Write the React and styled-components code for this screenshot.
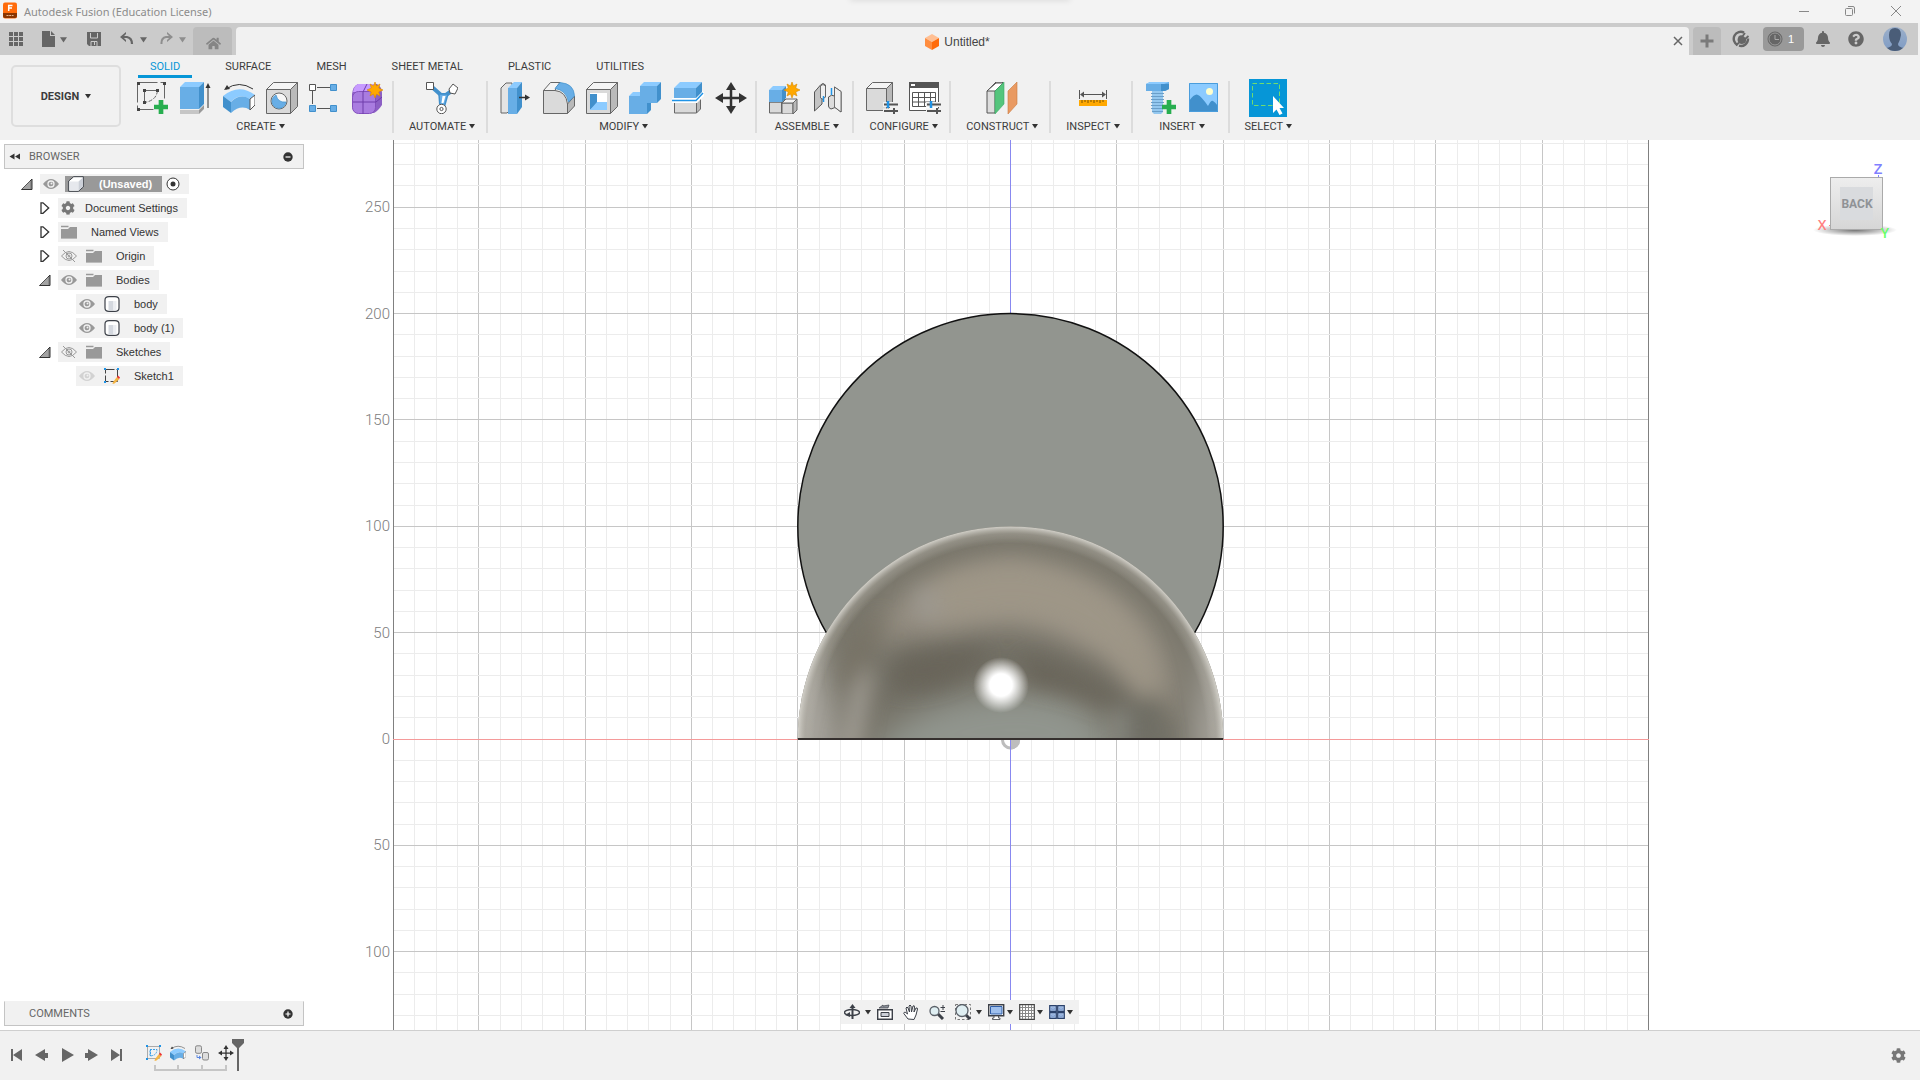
import React from 'react'
import styled, { createGlobalStyle } from 'styled-components'
import { FaBell, FaQuestionCircle, FaHome, FaCog } from 'react-icons/fa'

const GlobalStyle = createGlobalStyle`
    * {
        box-sizing: border-box;
    }
    body {
        margin: 0;
        background: #f1f1f1;
        color: #3c3c3c;
        font-family: "Liberation Sans", Arial, sans-serif;
        font-size: 11px;
    }
    button {
        display: inline-flex;
        align-items: center;
        justify-content: center;
        padding: 0;
        border: 0;
        background: none;
        color: inherit;
        font: inherit;
        cursor: pointer;
    }
    svg {
        display: block;
        flex: none;
    }
`

const Page = styled.div`
    display: flex;
    flex-direction: column;
    min-height: 100vh;
`

/* ---------- icons ---------- */

const B = { front: '#68aee6', top: '#8ccbff', side: '#4190cc' }
const G = { front: '#dadada', top: '#f4f4f4', side: '#b9b9b9' }

const Svg = ({ w = 32, h = w, vw = w, vh = h, children, ...rest }) => (
    <svg width={w} height={h} viewBox={`0 0 ${vw} ${vh}`} fill="none" aria-hidden="true" {...rest}>
        {children}
    </svg>
)

const Caret = ({ size = 6, color = '#333' }) => (
    <Svg w={size} h={size} vw={6} vh={6}><path d="M0 1h6L3 5.500z" fill={color} /></Svg>
)

const Box = ({ x = 0, y = 0, w = 20, h = 22, d = 6, c = G, stroke = 'none' }) => (
    <g stroke={stroke} strokeLinejoin="round">
        <path d={`M${x} ${y + d}h${w}v${h}h${-w}z`} fill={c.front} />
        <path d={`M${x} ${y + d}l${d} ${-d}h${w}l${-d} ${d}z`} fill={c.top} />
        <path d={`M${x + w} ${y + d}l${d} ${-d}v${h}l${-d} ${d}z`} fill={c.side} />
    </g>
)

const Plus = ({ x, y, s = 13 }) => (
    <path
        d={`M${x} ${y - s / 2}v${s}M${x - s / 2} ${y}h${s}`}
        stroke="#27ae4f" strokeWidth={s / 3}
    />
)

const Star = ({ x, y }) => (
    <path
        transform={`translate(${x} ${y})`}
        d="M0-8L1.500-4L5-6L3.700-2L8 0L3.700 2L5 6L1.500 4L0 8L-1.500 4L-5 6L-3.700 2L-8 0L-3.700-2L-5-6L-1.500-4z"
        fill="#ffa800" stroke="#d98a00" strokeWidth=".6"
    />
)

const SketchIcon = () => (
    <Svg>
        <path d="M.5.500h27v18M.5.500v27h17" stroke="#666" strokeDasharray="20 3" />
        <path d="M7.500 8.500h13M7.500 8.500v12" stroke="#666" />
        <path d="M20.500 8.500q-1 10-13 12" stroke="#666" strokeDasharray="4 1.500" />
        {[[0, 0], [26, 0], [0, 26], [6, 7], [19, 7], [6, 19]].map(([x, y]) => (
            <path key={x + '-' + y} d={`M${x} ${y}h3v3h-3z`} fill="#444" />
        ))}
        <Plus x={24} y={25} s={14} />
    </Svg>
)
const ExtrudeIcon = () => (
    <Svg>
        <path d="M0 28h19v4H0z" fill="#c6c6c6" /><path d="M19 28l5-5v4l-5 5z" fill="#999" />
        <Box w={19} h={22} d={5} c={B} />
        <path d="M28 26V4" stroke="#333" /><path d="M25.500 6L28 1l2.500 5z" fill="#333" />
    </Svg>
)
const RevolveIcon = ({ size = 32 }) => (
    <Svg w={size} vw={32} vh={32}>
        <path d="M3 7Q16-2 30 7" stroke="#333" /><path d="M1 8l3-5 3 4z" fill="#333" />
        <path d="M0 14Q16 1 32 13L27 17Q16 11 8 20z" fill={B.top} />
        <path d="M0 14l8 6v11l-8-6z" fill={B.side} />
        <path d="M8 20q9-9 19-3v11q-9-6-19 3z" fill={B.front} />
        <path d="M32 13v10l-5 5V17z" fill="#fff" stroke="#555" />
    </Svg>
)
const HoleIcon = () => (
    <Svg>
        <Box x={0.5} y={0.5} w={24} h={24} d={7} stroke="#666" />
        <circle cx="13" cy="19" r="8" fill="#f7f7f7" stroke="#666" />
        <path d="M10 13A7 7 0 1 0 20 20Q12 21 10 13z" fill={B.front} stroke={B.side} strokeWidth=".7" />
    </Svg>
)
const PatternIcon = () => (
    <Svg>
        <path d="M8 5.500h13M3.500 9v13M8 26.500h13" stroke="#555" />
        <path d="M.5 2.500h6v6h-6z" fill="#fff" stroke="#555" />
        <path d="M21.500 2.500h6v6h-6zM.5 23.500h6v6h-6zM21.500 23.500h6v6h-6z" fill={B.front} stroke={B.side} />
    </Svg>
)
const FormIcon = () => (
    <Svg>
        <path d="M6 2h19q5 3 5 9v12q-4 6-8 8H7q-7-1-7-8V12Q1 4 6 2z" fill="#8c5fc4" />
        <path d="M6 2h17l-4 8H1q1-6 5-8z" fill="#c79bff" />
        <rect x=".5" y="9.500" width="23" height="22" rx="6" fill="#a97ce0" stroke="#8350bd" />
        <path d="M11 10v22M1 20h23l6-5M11 10l4-8" stroke="#6f3cab" />
        <Star x={23} y={8} />
    </Svg>
)
const AutomateIcon = () => (
    <Svg>
        <path d="M6 5l9 8h5l7-5" stroke={B.side} strokeWidth="4" />
        <path d="M13 12l1 14h4l4-14z" fill={B.front} stroke={B.side} strokeWidth="1.500" />
        <path d="M16.500 14l-1 7h2l2-7z" fill="#fff" />
        <path d="M.5.500h7v7h-7z" fill="#fff" stroke="#555" />
        <path d="M23 7l4-5 5 4-3 6-5-1z" fill="#fff" stroke="#555" />
        <circle cx="15.500" cy="27" r="4.700" fill="#fff" stroke="#555" /><circle cx="15.500" cy="27" r="1.600" stroke="#555" />
    </Svg>
)
const PressPullIcon = () => (
    <Svg>
        <path d="M1 6l5-5h6v25l-5 5H1z" fill="#e4e4e4" stroke="#666" />
        <path d="M8 6h9v26H8z" fill={B.front} /><path d="M8 6l6-6h8l-5 6z" fill={B.top} /><path d="M17 6l5-6v25l-5 7z" fill={B.side} />
        <path d="M19 15.500h8" stroke="#333" strokeWidth="1.500" /><path d="M25 12.500l5 3-5 3z" fill="#333" />
    </Svg>
)
const FilletIcon = () => (
    <Svg>
        <path d="M.5 8.500L7.500.500H17q-4 4-5 8z" fill={G.top} stroke="#666" />
        <path d="M24.500 22l7-8v10l-7 7.500z" fill={G.side} stroke="#666" />
        <path d="M.5 8.500H12q11 1 12.500 13.500v9.500H.5z" fill={G.front} stroke="#666" />
        <path d="M12 6.500L17 .5q14 1 14.500 13.500L25.500 20Q23 8 12 6.500z" fill={B.front} stroke={B.side} strokeWidth=".7" />
    </Svg>
)
const ShellIcon = () => (
    <Svg>
        <Box x={0.5} y={0.5} w={24} h={24} d={7} stroke="#666" />
        <path d="M4 11h17v17H4z" fill="#fff" />
        <path d="M4 12h7v10l-7 6z" fill={B.side} /><path d="M11 20h10v8H4z" fill={B.top} />
    </Svg>
)
const CombineIcon = () => (
    <Svg>
        <Box x={0} y={10} w={18} h={18} d={4} c={B} />
        <Box x={11} y={0} w={17} h={17} d={4} c={B} />
        <path d="M1 15h16v8H1z" fill={B.front} />
    </Svg>
)
const SplitIcon = () => (
    <Svg>
        <Box x={2.5} y={16} w={22} h={11} d={4} stroke="#666" />
        <path d="M-1 18.500h25l8-8" stroke="#fff" strokeWidth="5" />
        <Box x={2} y={0} w={22} h={10} d={6} c={B} />
        <path d="M0 18.500h24l7-7.500" stroke="#1f93e6" strokeWidth="1.500" />
    </Svg>
)
const MoveIcon = ({ size = 32 }) => (
    <Svg w={size} vw={32} vh={32}>
        <path d="M16 5v22M5 16h22" stroke="#333" strokeWidth="2.500" />
        <path d="M16 0l5 8H11zM16 32l5-8H11zM0 16l8-5v10zM32 16l-8-5v10z" fill="#333" />
    </Svg>
)
const ComponentIcon = () => (
    <Svg>
        <Box x={0.5} y={17} w={12} h={11} d={3} stroke="#666" />
        <Box x={13} y={17} w={11} h={11} d={4} stroke="#666" />
        <Box x={0} y={4} w={13} h={12} d={4} c={B} />
        <Star x={23} y={8} />
    </Svg>
)
const JointIcon = () => (
    <Svg w={32}>
        <path d="M2.500 10l6-7q2.500-3 5 0v12l-3.500 2v5l-7.500 7z" fill="#c4c4c4" stroke="#555" />
        <path d="M8.500 4q2.500-3 5 0v11l-3 2-2-1z" fill="#efefef" stroke="#555" strokeWidth=".8" />
        <path d="M22.500 5l6.500 4.500V30l-6-4.500-4 1.500q-2.500-1-2.500-3v-9q3-3 6-1z" fill="#dcdcdc" stroke="#555" />
        <path d="M22.500 5l6.500 4.500V30l-6.500-5z" fill="#efefef" stroke="#555" strokeWidth=".8" />
        <path d="M11.500 14v6M19.500 6v7" stroke="#1f93e6" strokeWidth="1.500" />
    </Svg>
)
const Sliders = () => (
    <g>
        <path d="M17 22.500h15M17 29h15" stroke="#f1f1f1" strokeWidth="5" />
        <path d="M18 22.500h14M18 29h14" stroke="#555" strokeWidth="2" />
        <path d="M22 19v7" stroke="#1f93e6" strokeWidth="2.500" /><path d="M28 26v6" stroke="#555" strokeWidth="2" />
    </g>
)
const ConfigureIcon = () => (
    <Svg><Box x={0.5} y={0.5} w={20} h={22} d={6} stroke="#666" /><Sliders /></Svg>
)
const TableIcon = () => (
    <Svg>
        <path d="M.5.500h29v28H.5z" fill="#fff" stroke="#555" /><path d="M0 0h30v6H0z" fill="#555" /><path d="M2 2h4v2H2z" fill="#fff" />
        <path d="M3.500 10.500h23v14h-23zM3.500 15.500h23M3.500 20h23M9.500 10.500v14M15.500 10.500v14M21.500 10.500v9" stroke="#555" />
        <Sliders />
    </Svg>
)
const ConstructIcon = () => (
    <Svg>
        <path d="M1 9l9-9h7l-8 9v22H1z" fill="#ddd" stroke="#555" /><path d="M1 9l9-8h7l-8 8z" fill="#fff" stroke="#555" />
        <path d="M9 9l9-9v22l-9 10z" fill="#54c57c" stroke="#3da866" strokeWidth=".6" />
        <path d="M22 9l9-9v22l-9 10z" fill="#e99a62" stroke="#c97a3f" strokeWidth=".6" />
    </Svg>
)
const InspectIcon = () => (
    <Svg>
        <path d="M2.500 8v9M29.500 8v9M4 12.500h24" stroke="#555" />
        <path d="M3 12.500l4-3v6zM29 12.500l-4-3v6z" fill="#555" />
        <path d="M2 18h28v6H2z" fill="#ffa800" />
        <path d="M5 18v3M8 18v2M11 18v3M14 18v2M17 18v3M20 18v2M23 18v3M26 18v2" stroke="#7a5200" />
    </Svg>
)
const InsertIcon = () => (
    <Svg>
        <path d="M1 2l4-2h19v7l-4 2H1z" fill={B.front} /><path d="M16 2h8v5l-4 2h-4z" fill={B.side} />
        <path d="M1 2l4-2h19l-5 2z" fill={B.top} />
        <path d="M7 9h11v21l-2 2H9l-2-2z" fill="#94c8ef" />
        <path d="M6 11.500h13M6 14.500h13M6 17.500h13M6 20.500h13M6 23.500h13M6 26.500h13M7 29.500h11" stroke="#6a9fc9" />
        <Plus x={24} y={25} s={14} />
    </Svg>
)
const PictureIcon = () => (
    <Svg>
        <path d="M1 1h29v29H1z" fill="#8ccbff" />
        <path d="M1 30V19q6-8 9-6 3 1 10 11 3-6 5-5 2 1 5 5v6z" fill="#4190cc" />
        <path d="M1.500 1.500h28v28h-28z" stroke="#4a9ddc" />
        <circle cx="21.500" cy="9.500" r="3.500" fill="#ffffce" />
    </Svg>
)
const SelectIcon = () => (
    <Svg w={38}>
        <path d="M3.500 4.500h27v22h-27z" stroke="#6fdc6f" strokeDasharray="4.500 2.500" />
        <path d="M24 17v17l3.500-3.500 3 5.500 3-1.500-3-5.500h4.500z" fill="#fff" />
    </Svg>
)

/* ---------- title bar ---------- */

const TitleBar = styled.header`
    position: relative;
    display: flex;
    align-items: center;
    gap: 6px;
    height: 23px;
    padding: 0 18px 2px 3px;
    overflow: hidden;
    background: #f3f3f3;
    color: #8c8c8c;
    font: 11px "Noto Sans", "Open Sans", sans-serif;
`
const TitleShade = styled.div`
    position: absolute;
    top: -4px;
    left: 50%;
    width: 220px;
    height: 4px;
    margin-left: -110px;
    box-shadow: 0 0 6px rgba(0, 0, 0, 0.14);
`
const AppName = styled.span`
    flex: 1;
    padding-top: 2px;
`
const WindowButtons = styled.div`
    display: flex;
    gap: 34px;
`

const Title = () => (
    <TitleBar>
        <TitleShade />
        <Svg w={15} h={17}>
            <rect width="14" height="16" y=".5" rx="2" fill="#ff6b0b" />
            <path d="M0 11h14v3q0 2-2 2H2q-2 0-2-2z" fill="#8a3400" />
            <path d="M5.700 9V3.500H9.500M5.700 6H9" stroke="#fff" strokeWidth="1.500" />
            <path d="M3.500 13.500h7" stroke="#e8b890" strokeDasharray="2 .7" />
        </Svg>
        <AppName>Autodesk Fusion (Education License)</AppName>
        <WindowButtons>
            <button aria-label="Minimize"><Svg w={12}><path d="M1 6.500h10" stroke="#888" /></Svg></button>
            <button aria-label="Restore">
                <Svg w={12}>
                    <rect x="1.500" y="3.500" width="7" height="7" rx="1" stroke="#888" />
                    <path d="M4 1.500h5q1.500 0 1.500 1.500v5.500" stroke="#888" />
                </Svg>
            </button>
            <button aria-label="Close"><Svg w={12}><path d="M1 1l10 10M11 1L1 11" stroke="#888" /></Svg></button>
        </WindowButtons>
    </TitleBar>
)

/* ---------- quick access + document tab ---------- */

const TabBar = styled.div`
    display: flex;
    align-items: flex-end;
    height: 32px;
    margin-right: 2px;
    background: #cbcbcb;
    color: #666;
`
const QuickAccess = styled.div`
    display: flex;
    align-self: center;
    align-items: center;
    width: 193px;
    padding-left: 8px;
`
const QuickButton = styled.button`
    gap: 4px;
    margin-right: ${props => props.$after}px;
    opacity: ${props => (props.$dim ? 0.6 : 1)};
`
const HomeTab = styled.button`
    width: 39px;
    height: 28px;
    padding: 4px 0 0 2px;
    border-radius: 4px 4px 0 0;
    background: #bcbcbc;
    color: #858585;
    font-size: 15px;
`
const DocumentTab = styled.div`
    display: flex;
    flex: 1;
    align-items: center;
    height: 28px;
    margin: 0 4px;
    padding: 0 6px;
    border-radius: 4px 4px 0 0;
    background: #f1f1f1;
    color: #444;
    font-size: 12px;
`
const DocumentName = styled.div`
    display: flex;
    flex: 1;
    align-items: center;
    justify-content: center;
    gap: 5px;
    padding-top: 2px;
`
const AddTab = styled.button`
    width: 28px;
    height: 28px;
    border-radius: 4px 4px 0 0;
    background: #bcbcbc;
`
const Account = styled.div`
    display: flex;
    align-self: center;
    align-items: center;
    padding: 0 11px;
    font-size: 16px;
`
const AccountButton = styled.button`
    margin-right: ${props => props.$after}px;
`
const JobStatus = styled.button`
    justify-content: flex-start;
    gap: 5px;
    width: 41px;
    height: 24px;
    margin-right: 11px;
    padding-left: 4px;
    border-radius: 4px;
    background: #999;
    color: #fff;
    font-size: 11px;
`

const Tabs = () => (
    <TabBar>
        <QuickAccess>
            <QuickButton $after={18} aria-label="Data panel">
                <Svg w={16}>
                    {[1, 6, 11].map(y => <path key={y} d={`M1 ${y}h4v4h-4zM6 ${y}h4v4h-4zM11 ${y}h4v4h-4z`} fill="#666" />)}
                </Svg>
            </QuickButton>
            <QuickButton $after={20} aria-label="File">
                <Svg w={14} h={16}><path d="M0 0h8v5h5v11H0zM9 0l4 4H9z" fill="#666" /></Svg>
                <Caret size={7} color="#666" />
            </QuickButton>
            <QuickButton $after={18} aria-label="Save">
                <Svg w={15}>
                    <path d="M0 0h14v14H2l-2-2z" fill="#666" />
                    <path d="M3.500 1v5h7V1M4 14v-4.500h6V14" stroke="#cbcbcb" /><path d="M7.500 10v3" stroke="#cbcbcb" />
                </Svg>
            </QuickButton>
            <QuickButton $after={13} aria-label="Undo">
                <Svg w={16} h={14}><path d="M3 5h4q5 1 5 7" stroke="#666" strokeWidth="2.200" /><path d="M6 0v2L3 5l3 3v2L0 5z" fill="#666" /></Svg>
                <Caret size={7} color="#666" />
            </QuickButton>
            <QuickButton $after={0} $dim aria-label="Redo">
                <Svg w={15} h={14}><path d="M10 5H6Q1 6 1.500 12" stroke="#666" strokeWidth="2" /><path d="M7 0v2l3 3-3 3v2l6-5z" fill="#666" /></Svg>
                <Caret size={7} color="#666" />
            </QuickButton>
        </QuickAccess>
        <HomeTab aria-label="Home"><FaHome /></HomeTab>
        <DocumentTab>
            <DocumentName>
                <Svg w={14} h={16}>
                    <path d="M7 0l7 4-7 4-7-4z" fill="#ffbf93" /><path d="M0 4l7 4v8l-7-4z" fill="#ff8d3f" /><path d="M14 4L7 8v8l7-4z" fill="#ff6b0b" />
                </Svg>
                Untitled*
            </DocumentName>
            <button aria-label="Close document"><Svg w={10}><path d="M1 1l8 8M9 1L1 9" stroke="#666" strokeWidth="1.500" /></Svg></button>
        </DocumentTab>
        <AddTab aria-label="New design"><Svg w={14}><path d="M7 .5v13M.5 7h13" stroke="#7a7a7a" strokeWidth="3" /></Svg></AddTab>
        <Account>
            <AccountButton $after={13} aria-label="Extensions">
                <Svg w={18}>
                    <path d="M5.500 15A7 7 0 0 1 12 2.600M16 8.500A7 7 0 0 1 7 15.700" stroke="#666" strokeWidth="2.400" />
                    <path d="M6.500 6.500q3-2.500 6 .5t.5 6q-3.500 2-6 0t-.5-6.500z" fill="#666" />
                    <path d="M10 7l3-4M12.500 9.500l4-3.500M7 12.500l-3 3" stroke="#666" strokeWidth="1.800" />
                </Svg>
            </AccountButton>
            <JobStatus aria-label="Job status">
                <Svg w={16}><circle cx="8" cy="8" r="7" fill="#666" stroke="#666" /><circle cx="8" cy="8" r="6" stroke="#999" /><path d="M8 4v4.500h4" stroke="#aaa" /></Svg>
                1
            </JobStatus>
            <AccountButton $after={17} aria-label="Notifications"><FaBell /></AccountButton>
            <AccountButton $after={19} aria-label="Help"><FaQuestionCircle /></AccountButton>
            <button aria-label="Account">
                <Svg w={24}>
                    <defs>
                        <clipPath id="avatar"><circle cx="12" cy="12" r="12" /></clipPath>
                        <linearGradient id="sky" x2="0" y2="1"><stop stopColor="#9db0ca" /><stop offset="1" stopColor="#7e9bc4" /></linearGradient>
                    </defs>
                    <g clipPath="url(#avatar)">
                        <path d="M0 0h24v24H0z" fill="url(#sky)" />
                        <path d="M12 1q6 0 6 7-1 6-3 9 0 3 6 4v3H3v-3q6-1 6-4-3-3-3-9 0-7 6-7z" fill="#4a5d78" />
                    </g>
                </Svg>
            </button>
        </Account>
    </TabBar>
)

/* ---------- ribbon ---------- */

const Ribbon = styled.nav`
    display: flex;
    height: 85px;
    background: #f1f1f1;
    font-family: Roboto, "Liberation Sans", sans-serif;
`
const Workspace = styled.button`
    gap: 6px;
    width: 110px;
    height: 62px;
    margin: 10px 4px 0 11px;
    border: 2px solid #dedede;
    border-radius: 5px;
    font-size: 11px;
    font-weight: 700;
`
const RibbonTabs = styled.div`
    display: flex;
    gap: 21px;
    padding-left: 13px;
`
const RibbonTab = styled.button`
    height: 23px;
    padding: 2px 12px 0;
    border-bottom: 3px solid ${props => (props.$active ? '#0696d7' : 'transparent')};
    color: ${props => (props.$active ? '#0696d7' : '#3c3c3c')};
`
const Groups = styled.div`
    display: flex;
    padding-top: 3px;
`
const Group = styled.section`
    display: flex;
    flex-direction: column;
    align-items: center;
    gap: 5px;
    height: 52px;
    padding: 1px 8px 0 12px;
    border-right: 2px solid ${props => (props.$last ? 'transparent' : '#dcdcdc')};
`
const GroupIcons = styled.div`
    display: flex;
    align-items: center;
    gap: 11px;
    height: 32px;
`
const GroupLabel = styled.button`
    gap: 3px;
    height: 16px;
    padding: 0 3px;
`
const SelectTool = styled.button`
    width: 38px;
    height: 38px;
    background: #0696d7;
`

const groups = [
    { label: 'CREATE', icons: [SketchIcon, ExtrudeIcon, RevolveIcon, HoleIcon, PatternIcon, FormIcon] },
    { label: 'AUTOMATE', icons: [AutomateIcon] },
    { label: 'MODIFY', icons: [PressPullIcon, FilletIcon, ShellIcon, CombineIcon, SplitIcon, MoveIcon] },
    { label: 'ASSEMBLE', icons: [ComponentIcon, JointIcon] },
    { label: 'CONFIGURE', icons: [ConfigureIcon, TableIcon] },
    { label: 'CONSTRUCT', icons: [ConstructIcon] },
    { label: 'INSPECT', icons: [InspectIcon] },
    { label: 'INSERT', icons: [InsertIcon, PictureIcon] },
    { label: 'SELECT', icons: [SelectIcon] },
]

const Toolbar = () => (
    <Ribbon>
        <Workspace>DESIGN <Caret /></Workspace>
        <div>
            <RibbonTabs>
                {['SOLID', 'SURFACE', 'MESH', 'SHEET METAL', 'PLASTIC', 'UTILITIES'].map((tab, i) => (
                    <RibbonTab key={tab} $active={i === 0}>{tab}</RibbonTab>
                ))}
            </RibbonTabs>
            <Groups>
                {groups.map(({ label, icons }) => (
                    <Group key={label} $last={label === 'SELECT'}>
                        <GroupIcons>
                            {icons.map((Icon, i) => {
                                const Tool = label === 'SELECT' ? SelectTool : 'button'
                                return <Tool key={i} aria-label={`${label} tool ${i + 1}`}><Icon /></Tool>
                            })}
                        </GroupIcons>
                        <GroupLabel>{label} <Caret /></GroupLabel>
                    </Group>
                ))}
            </Groups>
        </div>
    </Ribbon>
)

/* ---------- canvas drawing ---------- */

const Drawing = styled.svg`
    position: absolute;
    inset: 0;
    width: 100%;
    height: 100%;
`
const AxisText = styled.text`
    fill: #7c7c7c;
    font: 300 15px Roboto, sans-serif;
    text-anchor: end;
`

const CX = 1010.5
const CY = 599
const STEP = 21.27
const R = STEP * 10

const Scene = () => {
    const columns = []
    for (let i = -29; i <= 29; i++) columns.push(i)
    const rows = []
    for (let i = -13; i <= 28; i++) rows.push(i)
    return (
        <Drawing viewBox="0 0 1920 890" preserveAspectRatio="xMidYMid slice" role="img" aria-label="Model, back view">
            <defs>
                <clipPath id="dome"><path d={`M${CX - R} ${CY}a${R} ${R} 0 0 1 ${R * 2} 0z`} /></clipPath>
                <filter id="soft" x="-50%" y="-50%" width="200%" height="200%"><feGaussianBlur stdDeviation="10" /></filter>
                <filter id="wide" x="-50%" y="-50%" width="200%" height="200%"><feGaussianBlur stdDeviation="15" /></filter>
                <radialGradient id="rim" gradientUnits="userSpaceOnUse" cx={CX} cy={CY} r={R}>
                    <stop offset=".92" stopColor="#c8c5bc" stopOpacity="0" />
                    <stop offset=".965" stopColor="#b9b6ad" stopOpacity=".4" />
                    <stop offset="1" stopColor="#d2d0c9" />
                </radialGradient>
                <radialGradient id="spot">
                    <stop offset=".4" stopColor="#fff" />
                    <stop offset=".65" stopColor="#fff" stopOpacity=".6" />
                    <stop offset="1" stopColor="#fff" stopOpacity="0" />
                </radialGradient>
            </defs>
            <path d="M0 0h1920v890H0z" fill="#fff" />
            {columns.map(i => (
                <path
                    key={i} d={`M${Math.floor(CX + i * STEP) + 0.5} 0v890`}
                    stroke={i % 5 ? '#ececec' : '#c6c6c6'}
                />
            ))}
            {rows.map(i => (
                <path
                    key={i} d={`M393 ${Math.floor(CY - i * STEP) + 0.5}h1256`}
                    stroke={i % 5 ? '#ececec' : '#c6c6c6'}
                />
            ))}
            <path d="M393.500 0v890M1648.500 0v890" stroke="#808080" />
            <path d={`M393 ${CY + 0.5}h1256`} stroke="#f59a9a" />
            <path d={`M${CX} 0v890`} stroke="#8888f0" />
            {[25, 20, 15, 10, 5, 0, -5, -10].map(i => (
                <AxisText key={i} x="390" y={Math.round(CY - i * STEP) + 5}>{Math.abs(i * 10)}</AxisText>
            ))}

            <circle cx={CX} cy={CY + 1} r="8" fill="#fff" stroke="#bdbdbd" strokeWidth="3" />
            <path d={`M${CX} ${CY}h9.500a9.500 9.500 0 0 1-9.500 10.500z`} fill="#bdbdbd" />
            <path d={`M${CX} ${CY}v12`} stroke="#8888f0" />
            <circle cx={CX} cy={CY - R} r={R} fill="#92958f" stroke="#111" strokeWidth="1.500" />
            <g clipPath="url(#dome)">
                <path d="M790 380h440v230H790z" fill="#78756a" />
                <g filter="url(#wide)">
                    <path d="M785 620V540l40-40q-4 40 8 60l8 65zM1230 620V510l-24-30q0 60-8 85l-6 60z" fill="#a9a69f" />
                    <path d="M875 500q10-64 135-83 115 10 160 100 8 40 2 70-45-45-90-75-40-32-110-24-60 18-97 12z" fill="#989184" />
                    <path d="M870 560q70 10 120-32h40q90 10 150 82v-20l-60-70-80-25H900z" fill="#6b675d" opacity=".6" />
                    <path d="M865 625q35-62 135-70t120 70z" fill="#91958e" />
                </g>
                <g filter="url(#soft)">
                    <path d="M915 460q25-34 95-38 95 8 134 77 18 45 16 70-22-16-52-52-38-36-96-42-40 4-72 6-24 0-25-21z" fill="#9f9687" opacity=".85" />
                    <path d="M914 450q12-8 22 4t-4 28q-18 4-18-32z" fill="#9d9a94" opacity=".7" />
                    <path d="M838 615l16-70q10-24 18-12l-14 82z" fill="#a29e95" />
                    <path d="M846 550q-8-38 28-72l14-4q-24 40-28 70z" fill="#787264" opacity=".8" />
                    <path d="M892 548q60 8 100-38-50-4-94 10zM1020 515q70 10 122 62l-22-4q-44-22-92-28z" fill="#69655a" />
                    <path d="M1150 555q14-6 16 55h-42q-2-26 2-40z" fill="#6f6e65" />
                    <path d="M1112 570h14v40h-14z" fill="#8a8b83" />
                </g>
                <path d="M790 380h440v230H790z" fill="url(#rim)" />
                <circle cx="1001" cy="545" r="28" fill="url(#spot)" />
            </g>
            <path d={`M${CX - R} ${CY}h${R * 2}`} stroke="#35302e" strokeWidth="2" />
        </Drawing>
    )
}

/* ---------- panels over the canvas ---------- */

const Viewport = styled.main`
    position: relative;
    display: flex;
    flex: 1;
    justify-content: space-between;
`
const LeftDock = styled.aside`
    position: relative;
    display: flex;
    flex-direction: column;
    justify-content: space-between;
    width: 300px;
    margin: 4px 0 4px 4px;
`
const PanelHeader = styled.div`
    display: flex;
    align-items: center;
    height: 25px;
    padding: 0 10px 0 4px;
    border: 1px solid #c4c4c4;
    border-top-color: ${props => (props.$bottom ? '#f1f1f1' : '#c4c4c4')};
    background: #f1f1f1;
    color: #666;
    font: 11px Roboto, sans-serif;
`
const PanelTitle = styled.span`
    flex: 1;
    padding-left: ${props => (props.$bottom ? 20 : 9)}px;
`
const Tree = styled.ul`
    display: flex;
    flex-direction: column;
    gap: 4px;
    margin: 5px 0 0;
    padding: 0;
    list-style: none;
`
const TreeItem = styled.li`
    display: flex;
    align-items: center;
    height: 20px;
    padding-left: ${props => 17 + props.$depth * 18}px;
`
const Toggle = styled.button`
    width: 12px;
    margin-right: 7px;
`
const TogglePad = styled.span`
    width: 19px;
`
const TreeRow = styled.div`
    display: flex;
    align-items: center;
    gap: 9px;
    height: 20px;
    padding: 0 9px 0 3px;
    background: #f1f1f1;
    color: #333;
`
const TreeLabel = styled.span`
    padding-left: ${props => (props.$near ? 1 : 5)}px;
`
const RootLabel = styled.span`
    display: flex;
    align-items: center;
    gap: 15px;
    height: 16px;
    margin: 0 -5px 0 -3px;
    padding: 0 10px 0 3px;
    background: #999;
    color: #fff;
    font-weight: 700;
`

const Eye = ({ off, faint }) => (
    <Svg w={16} opacity={faint ? 0.35 : 1}>
        {off ? (
            <g stroke="#999">
                <path d="M.5 8q7.500-9 15 0-7.500 9-15 0z" /><circle cx="8" cy="8" r="3" /><circle cx="8" cy="8" r="1" /><path d="M2 2l12 12" />
            </g>
        ) : (
            <g>
                <path d="M0 8q8-10 16 0-8 10-16 0z" fill="#999" />
                <circle cx="8" cy="8" r="3" stroke="#f1f1f1" strokeWidth="1.300" />
                <circle cx="8.500" cy="7.500" r="1" fill="#f1f1f1" />
            </g>
        )}
    </Svg>
)
const Folder = () => (
    <Svg w={16}><path d="M0 5h7l2-2h7v11H0z" fill="#999" /><path d="M0 2.500h7.500" stroke="#999" strokeWidth="1.500" /><path d="M0 14.500h16" stroke="#bbb" /></Svg>
)
const BodyIcon = () => (
    <Svg w={16}>
        <path d="M1 4q0-3.300 4-3.300h6q4 0 4 3.300v8q0 3.300-4 3.300H5q-4 0-4-3.300z" fill="#fff" stroke="#3c4048" strokeWidth="1.200" />
        <path d="M4.500 5h5v9.500h-5z" fill="#d4d8df" /><path d="M9.500 5h3v9.500h-3z" fill="#eceef2" />
    </Svg>
)
const CubeIcon = () => (
    <Svg w={16}>
        <path d="M.7 5l5-4.300h9.600V11l-5 4.300H.7z" fill="#fff" stroke="#3c4048" strokeLinejoin="round" />
        <path d="M1.500 5.500h9v9h-9z" fill="#e6e8ed" /><path d="M10.500 5.500L15 1.500v9l-4.500 4z" fill="#ccd0d8" />
    </Svg>
)
const Pencil = () => (
    <g><path d="M9 14l4-5 2.500 2-5 4.500-2 .5z" fill="#f5b544" /><path d="M13 9l1-1.500 2 2-1 1.500z" fill="#e33" /></g>
)
const SketchSmall = ({ full }) => (
    <Svg w={16}>
        <path d="M1.500 1.500h12v12h-12z" stroke={full ? '#aaa' : '#444'} strokeDasharray={full ? 'none' : '9 2'} />
        {full && <path d="M4 4.500h7q0 6-7 6.500zM4.500 4v7" stroke="#3ba0ea" strokeDasharray="2 1" />}
        <path d="M0 0h2v2H0zM13 0h2v2h-2zM0 13h2v2H0z" fill="#1f93e6" />
        <Pencil />
    </Svg>
)
const SwitchIcon = ({ open }) => (
    <Svg w={12}>
        {open
            ? <g><path d="M.5 11.500h10.500V1z" fill="#8b8b8b" stroke="#333" /><path d="M1 11L9 3v8z" fill="#bbb" opacity=".5" /></g>
            : <path d="M2 0.800v10.500h2L9.700 6 4 .8z" fill="#fff" stroke="#333" strokeWidth="1.300" />}
    </Svg>
)
const RoundMark = ({ plus }) => (
    <Svg w={10}><circle cx="5" cy="5" r="4.700" fill="#333" /><path d={plus ? 'M2.500 5h5M5 2.500v5' : 'M2.500 5h5'} stroke="#fff" strokeWidth="1.200" /></Svg>
)

const nodes = [
    { name: 'Document Settings', depth: 1, toggle: 'closed', gear: true },
    { name: 'Named Views', depth: 1, toggle: 'closed', icon: <Folder /> },
    { name: 'Origin', depth: 1, toggle: 'closed', eye: 'off', icon: <Folder /> },
    { name: 'Bodies', depth: 1, toggle: 'open', eye: 'on', icon: <Folder /> },
    { name: 'body', depth: 2, eye: 'on', icon: <BodyIcon /> },
    { name: 'body (1)', depth: 2, eye: 'on', icon: <BodyIcon /> },
    { name: 'Sketches', depth: 1, toggle: 'open', eye: 'off', icon: <Folder /> },
    { name: 'Sketch1', depth: 2, eye: 'faint', icon: <SketchSmall /> },
]

const Browser = () => (
    <LeftDock>
        <div>
            <PanelHeader>
                <Svg w={11}><path d="M5.500 2.500v6L.5 5.500zM11 2.500v6L6 5.500z" fill="#333" /></Svg>
                <PanelTitle>BROWSER</PanelTitle>
                <button aria-label="Collapse browser"><RoundMark /></button>
            </PanelHeader>
            <Tree>
                <TreeItem $depth={0}>
                    <Toggle aria-label="Collapse (Unsaved)"><SwitchIcon open /></Toggle>
                    <TreeRow>
                        <Eye />
                        <RootLabel><CubeIcon />(Unsaved)</RootLabel>
                        <Svg w={14}><circle cx="7" cy="7" r="6" fill="#fff" stroke="#333" /><circle cx="7" cy="7" r="2.500" fill="#333" /></Svg>
                    </TreeRow>
                </TreeItem>
                {nodes.map(node => (
                    <TreeItem key={node.name} $depth={node.depth}>
                        {node.toggle
                            ? <Toggle aria-label={`Toggle ${node.name}`}><SwitchIcon open={node.toggle === 'open'} /></Toggle>
                            : <TogglePad />}
                        <TreeRow>
                            {node.eye && <Eye off={node.eye === 'off'} faint={node.eye === 'faint'} />}
                            {node.gear ? <FaCog size={14} color="#777" /> : node.icon}
                            <TreeLabel $near={node.gear}>{node.name}</TreeLabel>
                        </TreeRow>
                    </TreeItem>
                ))}
            </Tree>
        </div>
        <PanelHeader $bottom>
            <PanelTitle $bottom>COMMENTS</PanelTitle>
            <button aria-label="Expand comments"><RoundMark plus /></button>
        </PanelHeader>
    </LeftDock>
)

const NavBar = styled.div`
    position: absolute;
    bottom: 6px;
    left: 50%;
    display: flex;
    align-items: center;
    gap: 10px;
    height: 24px;
    padding: 0 0 0 3px;
    background: #f1f1f1;
    transform: translateX(-50%);
`
const NavButton = styled.button`
    gap: ${props => (props.$wide ? 5 : 2)}px;
    margin-right: ${props => (props.$menu ? -4 : 0)}px;
`
const NavEnd = styled.span`
    width: 0;
`

const Orbit = () => (
    <Svg w={16}>
        <ellipse cx="8" cy="8.500" rx="7.500" ry="3" stroke="#3c4048" strokeWidth="1.400" />
        <path d="M8.500 15V3" stroke="#3c4048" strokeWidth="2" /><path d="M5.500 4l3-4 3 4zM1 11l5-3v5z" fill="#3c4048" />
    </Svg>
)
const LookAt = () => (
    <Svg w={16}>
        <path d="M.7 5.700h14.600v9.600H.7z" fill="#fff" stroke="#3c4048" strokeWidth="1.400" /><path d="M4 8.500h8v4H4z" fill="#ccd0d8" stroke="#3c4048" />
        <path d="M2 4l4-3v1l6-1-1 3z" fill="#8a8f98" stroke="#3c4048" strokeWidth=".7" />
    </Svg>
)
const Pan = () => (
    <Svg w={16}>
        <path
            d="M5 15L.8 9.500q0-2 2-1L4.500 10 3 4q1-2 2 0l1.500 4-.5-6q1-2 2 0l.5 6L10 2q1.500-1 1.500 1L11 8l2-4q1.500-.5 1.500 1L13 11l-2 4.500z"
            fill="#fff" stroke="#3c4048" strokeLinejoin="round"
        />
    </Svg>
)
const Lens = ({ fit }) => (
    <Svg w={16}>
        {fit && <path d="M.5.500h15v15H.5z" stroke="#777" strokeDasharray="2.500 2" />}
        <path d={fit ? 'M11 11l4 4' : 'M9 10l5 5'} stroke="#3c4048" strokeWidth="3" />
        <circle cx={fit ? 7 : 5.5} cy={fit ? 6.5 : 7} r={fit ? 6 : 4.5} fill="#dfeef2" stroke="#5a6068" strokeWidth="1.300" />
        {!fit && <path d="M14 1v5M11.500 3.500h4.500M11.500 7.500h4.500" stroke="#3c4048" />}
    </Svg>
)
const Display = () => (
    <Svg w={17} h={16}>
        <path d="M.7.700h15v11h-15z" fill="#fff" stroke="#3c4048" strokeWidth="1.400" /><path d="M2.500 2.500h11.500v7.500H2.500z" fill="#9fc0ee" stroke="#2f5ea8" />
        <path d="M6 12v2H4.500v1.500h7.500V14h-1.500v-2z" fill="#fff" stroke="#3c4048" strokeWidth=".8" />
    </Svg>
)
const GridIcon = () => (
    <Svg w={16}><path d="M.7.700h14.600v14.600H.7z" fill="#fff" stroke="#444" strokeWidth="1.200" /><path d="M3.500 1v14M6.500 1v14M9.500 1v14M12.500 1v14M1 3.500h14M1 6.500h14M1 9.500h14M1 12.500h14" stroke="#888" /></Svg>
)
const Viewports = () => (
    <Svg w={16}>
        <path d="M.7 1.700h6.600v5.600H.7zM8.700 1.700h6.600v5.600H8.700zM.7 8.700h6.600v5.600H.7zM8.700 8.700h6.600v5.600H8.700z" fill="#a9c3ea" stroke="#2c426b" strokeWidth="1.200" />
        <path d="M2.500 4h3v1.500h-3zM10.500 4h3v1.500h-3zM2.500 11h3v1.500h-3zM10.500 11h3v1.500h-3z" stroke="#7d9ccd" strokeWidth=".8" />
    </Svg>
)

const Navigation = () => (
    <NavBar>
        <NavButton $wide $menu aria-label="Orbit"><Orbit /><Caret /></NavButton>
        <NavButton aria-label="Look at"><LookAt /></NavButton>
        <NavButton aria-label="Pan"><Pan /></NavButton>
        <NavButton aria-label="Zoom"><Lens /></NavButton>
        <NavButton $wide $menu aria-label="Fit"><Lens fit /><Caret /></NavButton>
        <NavButton $menu aria-label="Display settings"><Display /><Caret /></NavButton>
        <NavButton $menu aria-label="Grid and snaps"><GridIcon /><Caret /></NavButton>
        <NavButton $menu aria-label="Viewports"><Viewports /><Caret /></NavButton>
        <NavEnd />
    </NavBar>
)

const CubeSvg = styled.svg`
    position: relative;
    margin: 15px 20px 0 0;
    font-family: "Open Sans", sans-serif;
    font-weight: 600;
    text-anchor: middle;
`
const FaceText = styled.text`
    fill: #8f9296;
    font: 700 12px Roboto, sans-serif;
`

const ViewCube = () => (
    <CubeSvg width="90" height="90" viewBox="0 0 90 90" role="img" aria-label="View cube">
        <defs>
            <linearGradient id="face" x2="0" y2="1"><stop stopColor="#eeeeee" /><stop offset="1" stopColor="#d6d6d6" /></linearGradient>
            <radialGradient id="cubeShade"><stop stopColor="#000" stopOpacity=".55" /><stop offset="1" stopColor="#000" stopOpacity="0" /></radialGradient>
        </defs>
        <ellipse cx="45" cy="75" rx="42" ry="6" fill="url(#cubeShade)" />
        <text x="68" y="19" fontSize="15" fill="#8080ff">Z</text>
        <text x="12" y="75" fontSize="14" fill="#ff8080">X</text>
        <path d="M19 70.500h2" stroke="#ff8080" /><path d="M68.500 20v2" stroke="#8080ff" />
        <rect x="20.500" y="22.500" width="52" height="52" fill="url(#face)" stroke="#aaa" />
        <rect x="30" y="32" width="33" height="33" fill="#d9dbde" />
        <FaceText x="47" y="53">BACK</FaceText>
        <text x="75" y="83" fontSize="14" fill="#66ff66">Y</text>
    </CubeSvg>
)

/* ---------- timeline ---------- */

const TimelineBar = styled.footer`
    display: flex;
    height: 50px;
    padding: 0 14px 0 10px;
    border-top: 1px solid #cfcfcf;
    background: #f1f1f1;
`
const Playback = styled.div`
    display: flex;
    align-items: center;
    gap: 11px;
    width: 136px;
    height: 48px;
`
const History = styled.div`
    flex: 1;
    padding-top: 14px;
`
const Features = styled.div`
    display: flex;
    align-items: flex-start;
    gap: 8px;
    height: 20px;
`
const Track = styled.svg`
    margin-left: 7px;
`
const Marker = styled.div`
    position: absolute;
    top: 9px;
    left: 232px;
`
const TimelineWrap = styled.div`
    position: relative;
`

const playIcons = [
    ['Go to start', 'M1 1h2v12H1zM12 1v12L3 7z'],
    ['Step back', 'M0 7l10-6v12zM10 5h3v5h-3z'],
    ['Play', 'M2 0l12 7-12 7z'],
    ['Step forward', 'M0 5h3v5H0zM3 1l10 6-10 6z'],
    ['Go to end', 'M1 1l9 6-9 6zM10 1h2v12h-2z'],
]

const CopyIcon = () => (
    <Svg w={16}>
        <rect x="1.500" y=".8" width="6" height="7.500" rx="1.500" fill="#ddd" stroke="#888" /><rect x="8.500" y="7.500" width="6" height="7.500" rx="1.500" fill="#ddd" stroke="#888" />
        <path d="M3 10v2.500h3" stroke="#5a86e0" /><path d="M5 10.500l2.500 2L5 14.500z" fill="#5a86e0" />
    </Svg>
)

const Timeline = () => (
    <TimelineWrap>
        <TimelineBar>
            <Playback>
                {playIcons.map(([name, d]) => (
                    <button key={name} aria-label={name}><Svg w={14}><path d={d} fill="#666" /></Svg></button>
                ))}
            </Playback>
            <History>
                <Features>
                    <button aria-label="Sketch1"><SketchSmall full /></button>
                    <button aria-label="Revolve1"><RevolveIcon size={16} /></button>
                    <button aria-label="CopyPasteBodies1"><CopyIcon /></button>
                    <button aria-label="Move1"><MoveIcon size={16} /></button>
                </Features>
                <Track width="76" height="7" fill="none" aria-hidden="true">
                    <path d="M2 0v5h71V0M25 0v5M49 0v5" stroke="#c6c6c6" strokeWidth="2" />
                </Track>
            </History>
            <button aria-label="Timeline options"><FaCog size={15} color="#777" /></button>
        </TimelineBar>
        <Marker><Svg w={12} h={32}><path d="M0 0h12v4L7 9v23H5V9L0 4z" fill="#666" /></Svg></Marker>
    </TimelineWrap>
)

const App = () => (
    <Page>
        <GlobalStyle />
        <Title />
        <Tabs />
        <Toolbar />
        <Viewport>
            <Scene />
            <Browser />
            <ViewCube />
            <Navigation />
        </Viewport>
        <Timeline />
    </Page>
)

export default App
